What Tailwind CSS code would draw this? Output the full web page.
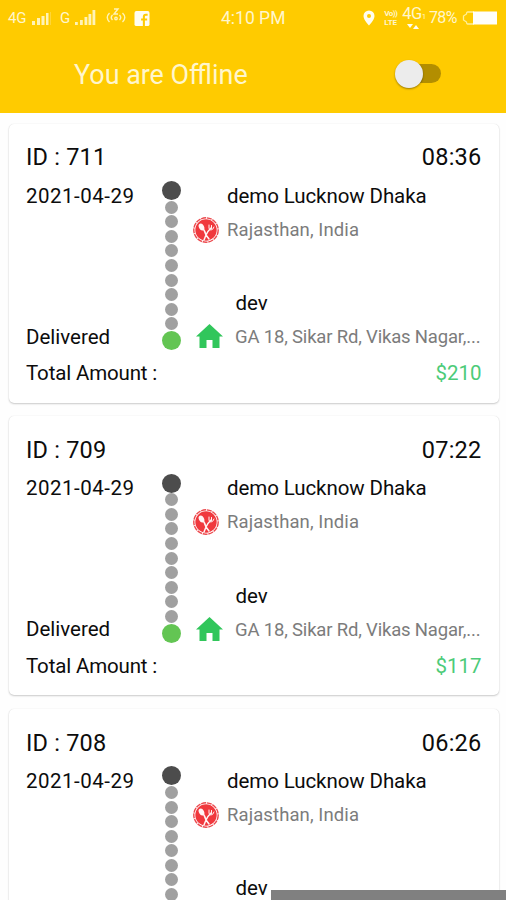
<!DOCTYPE html>
<html lang="en">
<head>
<meta charset="utf-8">
<title>Orders</title>
<script src="https://cdn.jsdelivr.net/npm/@tailwindcss/browser@4"></script>
</head>
<body class="bg-[#fefefe] font-['Roboto',sans-serif] text-[#0c0c0c]">
<div class="relative h-[900px] w-[506px] overflow-hidden">
  <header class="h-[112.5px] bg-[#ffcb00] text-[#fff6cc]">
    <div class="flex h-9 items-center pl-2 pr-[7px] text-[15px]">
      <div class="flex w-[213px] items-center">
        <span class="w-[23px] text-[15px] tracking-[-0.2px]">4G</span>
        <svg class="h-[16px] w-[29px] shrink-0" viewBox="0 0 29 16" fill="#fff3b8"><path d="M1 11h3v4H1zM6 8h3v7H6zM10.500 6h3v9h-3zM15 3h2.500v12H15z"/><path d="M19 2h1v13h-1z" opacity=".3"/></svg>
        <span class="w-[14px] text-[15px]">G</span>
        <svg class="h-[18px] w-[23px] shrink-0" viewBox="0 0 23 18" fill="#fff3b8"><path d="M1 13h2.800v3H1zM6 11h2.800v5H6zM10.500 8h2.800v8h-2.800zM14.500 5h2.800v11h-2.800zM18.500 1h2.800v15h-2.800z"/></svg>
        <svg class="ml-[9px] mb-[3px] h-[19px] w-[20px] shrink-0" viewBox="0 0 20 19" fill="none" stroke="#fff3b8" stroke-width="1.400"><path d="M3.500 6Q-1 10.500 3.500 15M6.500 8Q4 10.500 6.500 13M16.500 6Q21 10.500 16.500 15M13.500 8Q16 10.500 13.500 13M8 2h4L8 7h4"/><circle cx="10" cy="11.500" r="1.200"/></svg>
        <svg class="ml-[8px] h-[15px] w-[16px] shrink-0" viewBox="0 0 16 16"><rect width="16" height="16" rx="2" fill="#fffdf0"/><path d="M14 4h-2q-2 0-2 2v10M7 9h6.500" fill="none" stroke="#ffcb00" stroke-width="2.200"/></svg>
      </div>
      <span class="w-[143px] pl-[0.5px] text-[17.500px]">4:10 PM</span>
      <svg class="h-[16px] w-[12px] shrink-0" viewBox="0 0 12 16"><path fill="#fffdf0" fill-rule="evenodd" d="M6 .5A5.500 5.500 0 0 0 .5 6C.5 10 6 15.500 6 15.500S11.500 10 11.500 6A5.500 5.500 0 0 0 6 .5M6 4a2 2 0 1 1 0 4 2 2 0 0 1 0-4"/></svg>
      <div class="ml-[9px] w-[18px] text-[8px] font-bold leading-[9px]"><div class="tracking-[-0.5px]">Vo))</div><div>LTE</div></div>
      <div class="flex w-[27px] flex-col text-[16.500px] leading-[14px] tracking-[-0.5px]">
        <span>4G<span class="text-[8px]">1</span></span>
        <svg class="ml-[5px] h-[5px] w-[13px]" viewBox="0 0 13 5" fill="#fffdf0"><path d="M0 0h6L3 4zM6 5h6L9 1z"/></svg>
      </div>
      <span class="w-[33px] text-[16px] tracking-[-0.7px]">78%</span>
      <svg class="h-[16px] w-[37px] shrink-0" viewBox="0 0 37 16"><path d="M12 2H5.500Q4.500 2 4.500 4L1.500 6v4l3 2q0 2 1 2H12" fill="none" stroke="#fff09a" stroke-width="1.300"/><rect x="11" y="1.500" width="24" height="13" fill="#fffefa"/></svg>
    </div>
    <div class="flex h-[76px] items-center justify-between pl-[74px] pr-[65px]">
      <h1 class="mt-[3px] text-[26.900px]">You are Offline</h1>
      <div class="relative mb-px h-[28px] w-[46px]">
        <div class="mt-[4.500px] ml-[6px] h-[19px] w-[40px] rounded-full bg-[#b38e00]"></div>
        <div class="absolute left-0 top-0 size-[28px] rounded-full bg-[#ececec] shadow-[0_1px_2px_#0006]"></div>
      </div>
    </div>
  </header>
  <main id="orders" class="flex flex-col gap-[13.600px] pl-[8.500px] pr-[7.500px] pt-[11px]"></main>
  <div class="absolute bottom-0 left-[271px] right-0 h-[10.500px] bg-[#808080]"></div>
</div>

<template id="card">
  <article class="h-[279px] shrink-0 rounded-[5px] bg-white pl-[17.500px] pr-[17px] pt-3 shadow-[0_1px_2px_#0003,0_0_1px_#0002]">
    <div class="flex h-11 items-center justify-between pt-px text-[23.500px]"><span data-f="id" class="tracking-[0.2px]"></span><span data-f="time" class="tracking-[0.25px]"></span></div>
    <div class="flex h-[173px] text-[20.500px]">
      <div class="flex w-[136px] flex-col justify-between">
        <span class="leading-[32px] tracking-[0.5px]">2021-04-29</span>
        <span data-f="status" class="leading-[31px]"></span>
      </div>
      <div class="flex w-[19px] flex-col items-center pt-[1.500px]">
        <i class="size-[19px] rounded-full bg-[#4c4c4c]"></i>
        <div data-f="dots" class="flex h-[131px] flex-col items-center justify-around"></div>
        <i class="size-[19px] rounded-full bg-[#63c553]"></i>
      </div>
      <div class="flex min-w-0 flex-1 flex-col pl-[11.500px]">
        <div class="whitespace-nowrap pl-[34.500px] leading-[32px] tracking-[-0.09px]">demo Lucknow Dhaka</div>
        <div class="flex h-[38px] items-center">
          <svg class="mr-[8.500px] mt-[2px] size-[26px] shrink-0" viewBox="0 0 26 26"><circle cx="13" cy="13" r="12.200" fill="none" stroke="#ec4a4e" stroke-width="1.400" stroke-dasharray="5 .8"/><circle cx="13" cy="13" r="10.700" fill="#f0383d"/><g fill="none" stroke="#fff5f5" stroke-width="1.500" stroke-linecap="round"><path d="M9 10Q12 14 13 18L11 23M18 11Q14 15 13 18l3 4"/><path d="M16 8v3q0 2 2 2t3-3M18.500 8.500v3" stroke-width="1"/></g><ellipse cx="8.500" cy="10" rx="2.500" ry="3.700" transform="rotate(-28 8.500 10)" fill="#fff5f5"/></svg>
          <span class="pt-[4px] text-[18.500px] tracking-[0.1px] text-[#7c7c7c]">Rajasthan, India</span>
        </div>
        <div class="mt-[41px] pl-[43px] leading-[32px]">dev</div>
        <div class="flex h-[37px] items-center pl-[3.500px]">
          <svg class="mr-[12px] mt-px h-[24px] w-[27px] shrink-0" viewBox="0 0 27 24"><path fill="#31c65b" d="M13.500 0 27 12.500H23.500V24H16.500V16H10.500V24H3.500V12.500H0Z"/></svg>
          <span data-f="address" class="whitespace-nowrap pt-[5px] text-[18.500px] tracking-[-0.18px] text-[#7c7c7c]"></span>
        </div>
      </div>
    </div>
    <div class="mt-[3px] flex h-9 items-center justify-between text-[20.500px]"><span data-f="total" class="tracking-[-0.15px]"></span><span data-f="amount" class="text-[#4ccb78]"></span></div>
  </article>
</template>
<script>
const address = 'GA 18, Sikar Rd, Vikas Nagar,...';
const orders = [
  {id: 'ID : 711', time: '08:36', status: 'Delivered', address, total: 'Total Amount :', amount: '$210'},
  {id: 'ID : 709', time: '07:22', status: 'Delivered', address, total: 'Total Amount :', amount: '$117'},
  {id: 'ID : 708', time: '06:26'}
];
const list = document.getElementById('orders');
for (const order of orders) {
  const card = document.getElementById('card').content.cloneNode(true);
  for (const key of Object.keys(order)) card.querySelector('[data-f=' + key + ']').textContent = order[key];
  card.querySelector('[data-f=dots]').innerHTML = '<i class="size-[13px] rounded-full bg-[#a0a0a0]"></i>'.repeat(9);
  list.append(card);
}
</script>
</body>
</html>
